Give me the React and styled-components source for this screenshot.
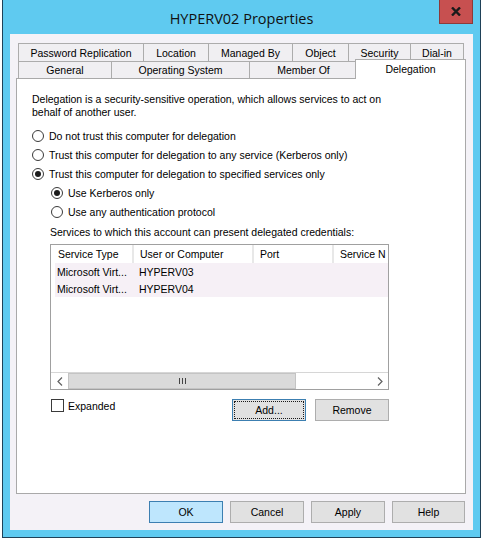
import React from 'react';
import styled, { createGlobalStyle } from 'styled-components';

const GlobalStyle = createGlobalStyle`
  html, body {
    margin: 0;
    padding: 0;
    background: #ffffff;
  }
  body {
    font-family: "Liberation Sans", Arial, sans-serif;
    font-size: 10.5px;
    color: #000000;
  }
  * {
    box-sizing: border-box;
  }
`;

const topTabs = [
  { label: 'Password Replication', width: 126 },
  { label: 'Location', width: 66 },
  { label: 'Managed By', width: 85 },
  { label: 'Object', width: 57 },
  { label: 'Security', width: 63 },
  { label: 'Dial-in', width: 54 },
];

const bottomTabs = [
  { label: 'General', width: 94 },
  { label: 'Operating System', width: 139 },
  { label: 'Member Of', width: 109 },
  { label: 'Delegation', width: 107, active: true },
];

const columns = [
  { label: 'Service Type', width: 82 },
  { label: 'User or Computer', width: 120 },
  { label: 'Port', width: 80 },
  { label: 'Service N', width: 60 },
];

const services = [
  ['Microsoft Virt...', 'HYPERV03', '', ''],
  ['Microsoft Virt...', 'HYPERV04', '', ''],
];

const Frame = styled.div`
  margin-left: 2px;
  width: 479px;
  height: 538px;
  display: flex;
  flex-direction: column;
  background: #5fcaf0;
  border: 1px solid #1f4158;
  border-top: none;
  padding: 0 7px 7px 7px;
`;

const TitleBar = styled.div`
  height: 34px;
  display: grid;
  grid-template-columns: 1fr auto 1fr;
  align-items: center;
`;

const Title = styled.div`
  grid-column: 2;
  font-family: "Open Sans", "Noto Sans", sans-serif;
  font-size: 14.5px;
  padding-top: 2px;
  color: #111111;
`;

const CloseButton = styled.div`
  grid-column: 3;
  justify-self: end;
  align-self: start;
  width: 34px;
  height: 24px;
  background: #c75050;
  border: 1px solid #8c3a3a;
  border-top: none;
  display: flex;
  align-items: center;
  justify-content: center;
`;

const Client = styled.div`
  flex: 1;
  display: flex;
  flex-direction: column;
  background: #f4f2f7;
  padding: 9px 7px 7px 6px;
`;

const TabStrip = styled.div`
  margin-left: 2px;
  display: flex;
  flex-direction: column;
`;

const TabRow = styled.div`
  display: flex;
  height: ${(p) => p.$height}px;
`;

const Tab = styled.div`
  flex-shrink: 0;
  width: ${(p) => p.$width}px;
  border: 1px solid #acacac;
  border-bottom: none;
  background: #f0eff2;
  display: flex;
  align-items: center;
  justify-content: center;
  white-space: nowrap;
  & + & {
    margin-left: -1px;
  }
  &.active {
    position: relative;
    z-index: 1;
    background: #ffffff;
    width: ${(p) => p.$width + 4}px;
    margin: -2px -2px -1px -3px;
    align-items: flex-start;
    padding-top: 3px;
  }
`;

const Panel = styled.div`
  flex: 1;
  background: #ffffff;
  border: 1px solid #a9a9a9;
  padding: 14px 15px 0 15px;
  display: flex;
  flex-direction: column;
`;

const Description = styled.p`
  margin: 0;
  line-height: 13px;
  width: 370px;
`;

const RadioGroup = styled.div`
  margin-top: 7px;
  display: flex;
  flex-direction: column;
`;

const RadioRow = styled.label`
  height: 19px;
  display: flex;
  align-items: center;
  gap: 5px;
  padding-left: ${(p) => (p.$nested ? 19 : 0)}px;
`;

const RadioCircle = styled.span`
  width: 12px;
  height: 12px;
  border-radius: 50%;
  border: 1px solid #3a3a3a;
  background: #ffffff;
  display: flex;
  align-items: center;
  justify-content: center;
  &::after {
    content: '';
    width: 6px;
    height: 6px;
    border-radius: 50%;
    background: ${(p) => (p.$checked ? '#1c1c1c' : 'transparent')};
  }
`;

const SectionLabel = styled.div`
  margin: 5px 0 0 18px;
  line-height: 13px;
`;

const ListBox = styled.div`
  margin: 5px 0 0 18px;
  width: 339px;
  height: 146px;
  border: 1px solid #a0a0a0;
  display: flex;
  flex-direction: column;
  overflow: hidden;
`;

const HeaderRow = styled.div`
  display: flex;
  height: 18px;
  flex-shrink: 0;
  padding-left: 1px;
`;

const HeaderCell = styled.div`
  flex-shrink: 0;
  width: ${(p) => p.$width}px;
  border-right: 2px solid #e8e8e8;
  padding-left: 6px;
  display: flex;
  align-items: center;
  white-space: nowrap;
  overflow: hidden;
`;

const Rows = styled.div`
  flex: 1;
  padding-left: 5px;
`;

const ServiceRow = styled.div`
  display: flex;
  height: 17px;
  background: #f6f0f6;
  margin-left: -1px;
`;

const Cell = styled.div`
  flex-shrink: 0;
  width: ${(p) => p.$width}px;
  padding-left: 2px;
  display: flex;
  align-items: center;
  white-space: nowrap;
  overflow: hidden;
`;

const ScrollBar = styled.div`
  height: 17px;
  flex-shrink: 0;
  display: flex;
  background: #ffffff;
  border-top: 1px solid #d6d6d6;
`;

const ScrollArrow = styled.div`
  width: 17px;
  flex-shrink: 0;
  display: flex;
  align-items: center;
  justify-content: center;
  background: #ffffff;
`;

const ScrollTrack = styled.div`
  flex: 1;
  display: flex;
  background: #ffffff;
`;

const ScrollThumb = styled.div`
  width: 228px;
  background: #dadada;
  border: 1px solid #c4c4c4;
  display: flex;
  align-items: center;
  justify-content: center;
`;

const Footer = styled.div`
  margin: 9px 0 0 18px;
  width: 339px;
  display: flex;
  align-items: flex-start;
`;

const CheckRow = styled.label`
  display: flex;
  align-items: center;
  gap: 4px;
  padding-left: 1px;
  height: 13px;
`;

const CheckBox = styled.span`
  width: 13px;
  height: 13px;
  border: 1px solid #3a3a3a;
  background: #ffffff;
`;

const ButtonGroup = styled.div`
  margin-left: auto;
  display: flex;
  gap: ${(p) => p.$gap}px;
`;

const Button = styled.div`
  width: ${(p) => p.$width || 74}px;
  height: 22px;
  display: flex;
  align-items: center;
  justify-content: center;
  background: ${(p) => (p.$primary ? '#bee6fd' : '#e1e1e1')};
  border: 1px solid ${(p) => (p.$primary || p.$focused ? '#3c7fb1' : '#adadad')};
  outline: ${(p) => (p.$focused ? '1px dotted #1a1a1a' : 'none')};
  outline-offset: -3px;
`;

const ButtonBar = styled.div`
  margin-top: 7px;
  display: flex;
  justify-content: flex-end;
  gap: 7px;
  padding-right: 1px;
`;

const Radio = ({ checked, nested, children }) => (
  <RadioRow $nested={nested}>
    <RadioCircle $checked={checked} />
    <span>{children}</span>
  </RadioRow>
);

const Chevron = ({ dir }) => (
  <svg width="6" height="9" viewBox="0 0 6 9">
    <path
      d={dir === 'left' ? 'M5 0.5 L1 4.5 L5 8.5' : 'M1 0.5 L5 4.5 L1 8.5'}
      fill="none"
      stroke="#606060"
      strokeWidth="1.2"
    />
  </svg>
);

const App = function () {
  return (
    <>
      <GlobalStyle />
      <Frame>
        <TitleBar>
          <Title>HYPERV02 Properties</Title>
          <CloseButton>
            <svg width="10" height="9" viewBox="0 0 10 9">
              <path d="M1 0.5 L9 8.5 M9 0.5 L1 8.5" stroke="#1a1a1a" strokeWidth="2.4" />
            </svg>
          </CloseButton>
        </TitleBar>
        <Client>
          <TabStrip>
            <TabRow $height={18}>
              {topTabs.map((t) => (
                <Tab key={t.label} $width={t.width}>{t.label}</Tab>
              ))}
            </TabRow>
            <TabRow $height={17}>
              {bottomTabs.map((t) => (
                <Tab key={t.label} $width={t.width} className={t.active ? 'active' : ''}>
                  {t.label}
                </Tab>
              ))}
            </TabRow>
          </TabStrip>
          <Panel>
            <Description>
              Delegation is a security-sensitive operation, which allows services to act on
              behalf of another user.
            </Description>
            <RadioGroup>
              <Radio>Do not trust this computer for delegation</Radio>
              <Radio>Trust this computer for delegation to any service (Kerberos only)</Radio>
              <Radio checked>Trust this computer for delegation to specified services only</Radio>
              <Radio checked nested>Use Kerberos only</Radio>
              <Radio nested>Use any authentication protocol</Radio>
            </RadioGroup>
            <SectionLabel>Services to which this account can present delegated credentials:</SectionLabel>
            <ListBox>
              <HeaderRow>
                {columns.map((c) => (
                  <HeaderCell key={c.label} $width={c.width}>{c.label}</HeaderCell>
                ))}
              </HeaderRow>
              <Rows>
                {services.map((row) => (
                  <ServiceRow key={row[1]}>
                    {row.map((v, i) => (
                      <Cell key={columns[i].label} $width={columns[i].width}>{v}</Cell>
                    ))}
                  </ServiceRow>
                ))}
              </Rows>
              <ScrollBar>
                <ScrollArrow><Chevron dir="left" /></ScrollArrow>
                <ScrollTrack>
                  <ScrollThumb>
                    <svg width="7" height="6" viewBox="0 0 7 6">
                      <path d="M0.5 0 V6 M3.5 0 V6 M6.5 0 V6" stroke="#444" strokeWidth="1" />
                    </svg>
                  </ScrollThumb>
                </ScrollTrack>
                <ScrollArrow><Chevron dir="right" /></ScrollArrow>
              </ScrollBar>
            </ListBox>
            <Footer>
              <CheckRow>
                <CheckBox />
                <span>Expanded</span>
              </CheckRow>
              <ButtonGroup $gap={9}>
                <Button $focused>Add...</Button>
                <Button>Remove</Button>
              </ButtonGroup>
            </Footer>
          </Panel>
          <ButtonBar>
            <Button $primary>OK</Button>
            <Button>Cancel</Button>
            <Button>Apply</Button>
            <Button $width={73}>Help</Button>
          </ButtonBar>
        </Client>
      </Frame>
    </>
  );
};

export default App;
